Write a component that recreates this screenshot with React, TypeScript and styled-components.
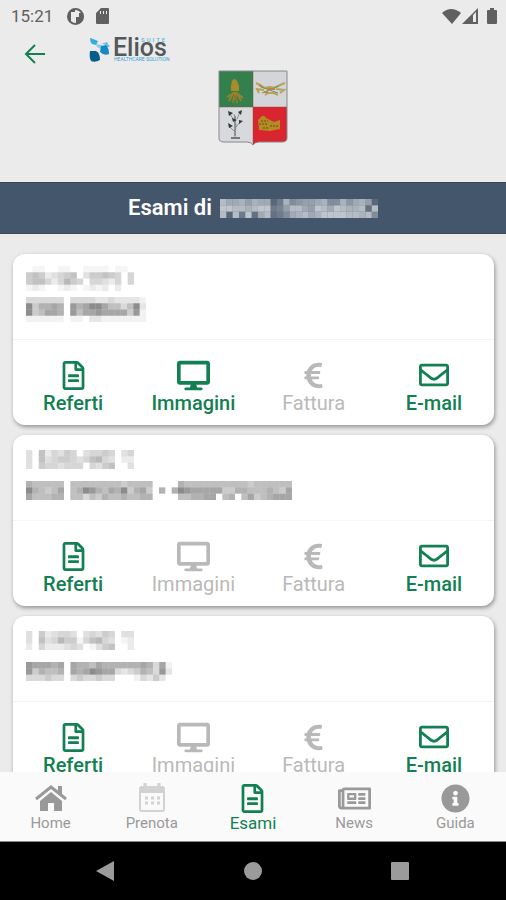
import React from "react";
import styled, { createGlobalStyle, css } from "styled-components";
import {
  FaDesktop,
  FaEuroSign,
  FaInfoCircle,
  FaRegEnvelope,
  FaRegFileAlt,
  FaRegNewspaper,
} from "react-icons/fa";

const green = "#128052";

const GlobalStyle = createGlobalStyle`
  * { box-sizing: border-box; }
  body {
    margin: 0;
    background: #ebebeb;
    font-family: Roboto, "Liberation Sans", sans-serif;
  }
  button { font: inherit; border: 0; padding: 0; background: none; cursor: pointer; }
  button:disabled { cursor: default; }
  svg { display: block; flex: none; }
`;

const Screen = styled.div`
  display: flex;
  flex-direction: column;
  height: 100vh;
  overflow: hidden;
`;

const StatusBar = styled.div`
  display: flex;
  align-items: center;
  justify-content: space-between;
  height: 32px;
  padding: 0 9px 0 11px;
  color: #606060;
`;

const StatusGroup = styled.div<{ $gap: number }>`
  display: flex;
  align-items: center;
  gap: ${(p) => p.$gap}px;
`;

const Clock = styled.time`
  font-size: 17px;
  line-height: 20px;
  margin-right: 2px;
`;

const Header = styled.header`
  display: flex;
  flex-direction: column;
  height: 150px;
`;

const HeaderRow = styled.div`
  display: flex;
  align-items: center;
  gap: 40px;
  height: 38px;
  padding: 0 22px;
`;

const BackButton = styled.button`
  display: flex;
  align-items: center;
  color: ${green};
  margin-top: 6px;
`;

const Logo = styled.svg`
  margin-bottom: 4px;
`;

const Crest = styled.svg`
  align-self: center;
`;

const TitleBand = styled.div`
  display: flex;
  align-items: center;
  justify-content: center;
  gap: 8px;
  flex: none;
  height: 52px;
  background: #44566b;
  border-top: 1px solid #35465a;
  border-bottom: 1px solid #3a4a5f;
`;

const Title = styled.h1`
  margin: 0;
  font-size: 22px;
  line-height: 28px;
  font-weight: 600;
  color: #fff;
`;

const List = styled.main`
  flex: 1;
  min-height: 0;
  overflow: hidden;
  display: flex;
  flex-direction: column;
  gap: 10px;
  padding: 20px 12px 0 13px;
`;

const Card = styled.article`
  flex: none;
  background: #fff;
  border-radius: 12px;
  box-shadow: 1px 2px 4px rgba(0, 0, 0, 0.38);
`;

const CardInfo = styled.div`
  display: flex;
  flex-direction: column;
  gap: 6px;
  padding: 12px 13px 17px;
  border-bottom: 1px solid #f4f4f4;
`;

const InfoLine = styled.div`
  display: flex;
  align-items: center;
  height: 25px;
`;

const Actions = styled.div`
  display: grid;
  grid-template-columns: repeat(4, 1fr);
  padding: 20px 0 9px;
`;

const Action = styled.button`
  display: flex;
  flex-direction: column;
  align-items: center;
  font-size: 20px;
  line-height: 26px;
  font-weight: 500;
  color: ${green};
  &:disabled { color: #b9b9b9; font-weight: 400; }
`;

const IconSlot = styled.span<{ $height: number }>`
  display: flex;
  align-items: center;
  justify-content: center;
  height: ${(p) => p.$height}px;
`;

const TabBar = styled.nav`
  flex: none;
  display: grid;
  grid-template-columns: repeat(5, 1fr);
  height: 70px;
  padding-top: 11px;
  background: #fafafa;
  border-bottom: 1px solid #8a8a8a;
`;

const Tab = styled.a<{ $active?: boolean }>`
  display: flex;
  flex-direction: column;
  align-items: center;
  text-decoration: none;
  color: #999;
  font-size: 15px;
  line-height: 20px;
  ${(p) =>
    p.$active &&
    css`
      color: ${green};
      font-size: 17px;
    `}
`;

const SystemBar = styled.div`
  flex: none;
  display: flex;
  align-items: center;
  justify-content: space-between;
  height: 58px;
  padding: 0 19%;
  background: #000;
`;

const SystemButton = styled.button`
  display: flex;
  color: #9b9b9b;
`;

/* Hides personal data behind a grid of squares; each hex digit is the opacity of one square. */
function Mosaic({ rows, color = "#000", strength = 0.04 }: { rows: string[]; color?: string; strength?: number }) {
  const cols = rows[0].length;
  return (
    <svg
      aria-hidden="true"
      width={Math.round((cols * 19) / 3)}
      height={Math.round((rows.length * 19) / 3)}
      viewBox={`0 0 ${cols} ${rows.length}`}
      preserveAspectRatio="none"
      fill={color}
    >
      {rows.flatMap((row, y) =>
        [...row].map((c, x) => (
          <rect key={`${x}-${y}`} x={x} y={y} width={1} height={1} opacity={parseInt(c, 16) * strength} />
        ))
      )}
    </svg>
  );
}

const patient = [
  "b99a8a9924a67889a66a79a82",
  "ccbbabcc458bb98cb9cbaab3b",
  "b2b4c39b3469ab9accccbbab6",
];

const exams = [
  {
    date: ["01100110011110110", "56523456035565404", "56642475404432404", "12100121012120200"],
    name: ["3333330333322322221", "9466760867997553592", "9457760857787777481", "1111110110221111111"],
    images: true,
  },
  {
    date: ["30624354034454034", "30634554346743022", "30544344404356003"],
    name: [
      "655555055555555455550000655555555554555555",
      "965457056986576946740606987777744665556547",
      "755566055354655655660000556677056057456777",
    ],
    images: false,
  },
  {
    date: ["30523443034354033", "30634755146743012", "20422234301356002"],
    name: ["87776707665766666676371", "84655607679877323465382", "33343303433433000132420"],
    images: false,
  },
];

function ExamCard({ exam }: { exam: (typeof exams)[number] }) {
  return (
    <Card>
      <CardInfo>
        <InfoLine><Mosaic rows={exam.date} /></InfoLine>
        <InfoLine><Mosaic rows={exam.name} strength={0.05} /></InfoLine>
      </CardInfo>
      <Actions>
        <Action>
          <IconSlot $height={30}><FaRegFileAlt size={29} /></IconSlot>
          Referti
        </Action>
        <Action disabled={!exam.images}>
          <IconSlot $height={30}><FaDesktop size={33} /></IconSlot>
          Immagini
        </Action>
        <Action disabled>
          <IconSlot $height={30}><FaEuroSign size={29} /></IconSlot>
          Fattura
        </Action>
        <Action>
          <IconSlot $height={30}><FaRegEnvelope size={30} /></IconSlot>
          E-mail
        </Action>
      </Actions>
    </Card>
  );
}

function EliosSuiteLogo() {
  return (
    <Logo width="86" height="36" viewBox="0 -5 86 36" role="img" aria-label="Elios Suite">
      <path d="M2 2L5 3L10 5L8 9L4 8Q2 6 2 2Z" fill="#2faee0" />
      <path d="M13 8L19 6L22 11L19 11L16 8Z" fill="#6cbfe6" />
      <path d="M8 8L14 9L13 13L9 11Z" fill="#8fcce8" />
      <path d="M13 10L18 9Q21 12 21 18Q16 20 12 16Z" fill="#1689c4" />
      <path d="M2 15L8 15Q12 17 12 24Q7 27 3 25Q1 21 2 15Z" fill="#075d8c" />
      <text x="25" y="20" fontSize="25" fontWeight="500" fill="#54575c">Elios</text>
      <text x="53" y="6" fontSize="6" fontWeight="500" letterSpacing="2" fill="#5bb8e0">SUITE</text>
      <text x="26" y="25" fontSize="5" fill="#35a3d6">HEALTHCARE SOLUTION</text>
    </Logo>
  );
}

function TownCrest() {
  return (
    <Crest width="70" height="78" viewBox="0 0 70 78" aria-hidden="true">
      <clipPath id="shield">
        <path d="M1 1H69V68Q69 72 64 72H41Q37 72 35 75Q33 72 29 72H6Q1 72 1 68Z" />
      </clipPath>
      <g clipPath="url(#shield)">
        <rect width="35" height="37" fill="#33804d" />
        <rect x="35" width="35" height="37" fill="#d3d5d8" />
        <rect y="37" width="35" height="41" fill="#d8d9dd" />
        <rect x="35" y="37" width="35" height="41" fill="#d9252f" />
      </g>
      <path d="M14 11Q16 7 19 11L21 16V21H13V16Z" fill="#a98c27" />
      <path d="M11 31L15 23H19L23 31M9 27L14 24M20 24L25 28M15 33L17 22L19 33" fill="none" stroke="#98802a" strokeWidth="2" />
      <path d="M15 25L20 29L15 32" stroke="#597438" strokeWidth="1" fill="none" />
      <path d="M38 13L42 15L47 18Q52 16 56 18L62 15L67 13M41 23L39 19L46 20M62 23L66 20L58 19M47 25L50 23H56L60 25" fill="none" stroke="#b5a45b" strokeWidth="2" />
      <path d="M43 17L60 23M44 23L61 16" stroke="#579b72" strokeWidth="1" />
      <path d="M49 19H57M46 22H50M41 15L44 17" stroke="#c58048" strokeWidth="2" />
      <path d="M17 67L18 55L16 44M18 57L23 51M17 52L12 44M17 62L11 56M19 49L22 42" stroke="#8b918f" strokeWidth="1" fill="none" />
      <path d="M17 46V66" stroke="#8b918f" strokeWidth="2" />
      <path d="M13 68H22" stroke="#777" strokeWidth="2" />
      <path d="M10 41L15 43L11 46ZM20 42L24 40L23 45ZM21 50L25 51L21 54ZM10 53L15 56L11 58ZM14 48L19 50L15 52Z" fill="#343838" />
      <path d="M40 50L43 47Q46 44 48 48L56 52L62 50V59L52 61L41 60Z" fill="#b48a24" />
      <path d="M41 54H50M43 51H50M52 56H61M45 58H51" stroke="#6b511c" strokeWidth="1" strokeDasharray="2 1" />
      <path d="M35 1V74M1 37H69" stroke="#8d4646" strokeOpacity=".45" strokeWidth="1" />
      <path d="M1 1H69V68Q69 72 64 72H41Q37 72 35 75Q33 72 29 72H6Q1 72 1 68Z" fill="none" stroke="#85898a" strokeWidth="1" />
    </Crest>
  );
}

export default function App() {
  return (
    <>
      <GlobalStyle />
      <Screen>
        <StatusBar>
          <StatusGroup $gap={12}>
            <Clock>15:21</Clock>
            <svg width="17" height="17" viewBox="0 0 17 17" aria-hidden="true">
              <circle cx="8.5" cy="8.5" r="7.5" fill="none" stroke="currentColor" strokeWidth="2" />
              <path d="M8 1A8 8 0 0 0 4 15L4 4H8Z M9 9H12V5H16A8 8 0 0 1 9 16Z" fill="currentColor" />
            </svg>
            <svg width="13" height="16" viewBox="0 0 13 16" aria-hidden="true">
              <path fillRule="evenodd" d="M5 0H12Q13 0 13 1V15Q13 16 12 16H1Q0 16 0 15V5ZM4 3V6H5V3ZM7 3V6H8V3ZM10 3V6H11V3Z" fill="currentColor" />
            </svg>
          </StatusGroup>
          <StatusGroup $gap={1}>
            <svg width="19" height="15" viewBox="0 0 19 15" aria-hidden="true">
              <path d="M0 4Q9 -4 19 4L10 15Z" fill="currentColor" />
            </svg>
            <svg width="24" height="16" viewBox="0 0 24 16" aria-hidden="true">
              <path fillRule="evenodd" d="M0 16L16 0V16ZM11 7V14H14V4Z" fill="currentColor" />
            </svg>
            <svg width="10" height="16" viewBox="0 0 10 16" aria-hidden="true">
              <path d="M3 0H7V2H9Q10 2 10 3V15Q10 16 9 16H1Q0 16 0 15V3Q0 2 1 2H3Z" fill="currentColor" />
            </svg>
          </StatusGroup>
        </StatusBar>

        <Header>
          <HeaderRow>
            <BackButton aria-label="Indietro">
              <svg width="26" height="22" viewBox="0 0 26 22" fill="none" stroke="currentColor" strokeWidth="2">
                <path d="M13 2L4 11L13 20M4 11H23" />
              </svg>
            </BackButton>
            <EliosSuiteLogo />
          </HeaderRow>
          <TownCrest />
        </Header>

        <TitleBand>
          <Title>Esami di</Title>
          <Mosaic rows={patient} color="#fff" strength={0.055} />
        </TitleBand>

        <List>
          {exams.map((exam, i) => (
            <ExamCard key={i} exam={exam} />
          ))}
        </List>

        <TabBar>
          <Tab href="#home">
            <IconSlot $height={30}>
              <svg width="34" height="28" viewBox="0 0 34 28" fill="currentColor" aria-hidden="true">
                <path d="M17 8L28 17V27H20V19H14V27H6V17Z" />
                <path d="M2 15L17 3L32 15" fill="none" stroke="currentColor" strokeWidth="3" />
                <path d="M24 2H28V12L24 9Z" />
              </svg>
            </IconSlot>
            Home
          </Tab>
          <Tab href="#prenota">
            <IconSlot $height={30}>
              <svg width="26" height="30" viewBox="0 0 26 30" aria-hidden="true">
                <path d="M6 0V6M20 0V6" stroke="#d2d2d2" strokeWidth="3" />
                <rect x="1" y="4" width="24" height="24" rx="2" fill="none" stroke="#d2d2d2" strokeWidth="2" />
                <path d="M1 4H25V10H1Z" fill="#d2d2d2" />
                <path d="M6 15H9M12 15H15M18 15H21M6 20H9M12 20H15M18 20H21" stroke="#d2d2d2" strokeWidth="3" />
              </svg>
            </IconSlot>
            Prenota
          </Tab>
          <Tab href="#esami" $active aria-current="page">
            <IconSlot $height={30}><FaRegFileAlt size={29} /></IconSlot>
            Esami
          </Tab>
          <Tab href="#news">
            <IconSlot $height={30}><FaRegNewspaper size={33} /></IconSlot>
            News
          </Tab>
          <Tab href="#guida">
            <IconSlot $height={30}><FaInfoCircle size={29} /></IconSlot>
            Guida
          </Tab>
        </TabBar>

        <SystemBar>
          <SystemButton aria-label="Indietro">
            <svg width="19" height="22" viewBox="0 0 19 22"><path d="M0 11L18 1V21Z" fill="currentColor" /></svg>
          </SystemButton>
          <SystemButton aria-label="Schermata iniziale">
            <svg width="20" height="20" viewBox="0 0 20 20"><circle cx="10" cy="10" r="9" fill="currentColor" /></svg>
          </SystemButton>
          <SystemButton aria-label="App recenti">
            <svg width="20" height="20" viewBox="0 0 20 20"><rect x="1" y="1" width="18" height="18" rx="1" fill="currentColor" /></svg>
          </SystemButton>
        </SystemBar>
      </Screen>
    </>
  );
}
